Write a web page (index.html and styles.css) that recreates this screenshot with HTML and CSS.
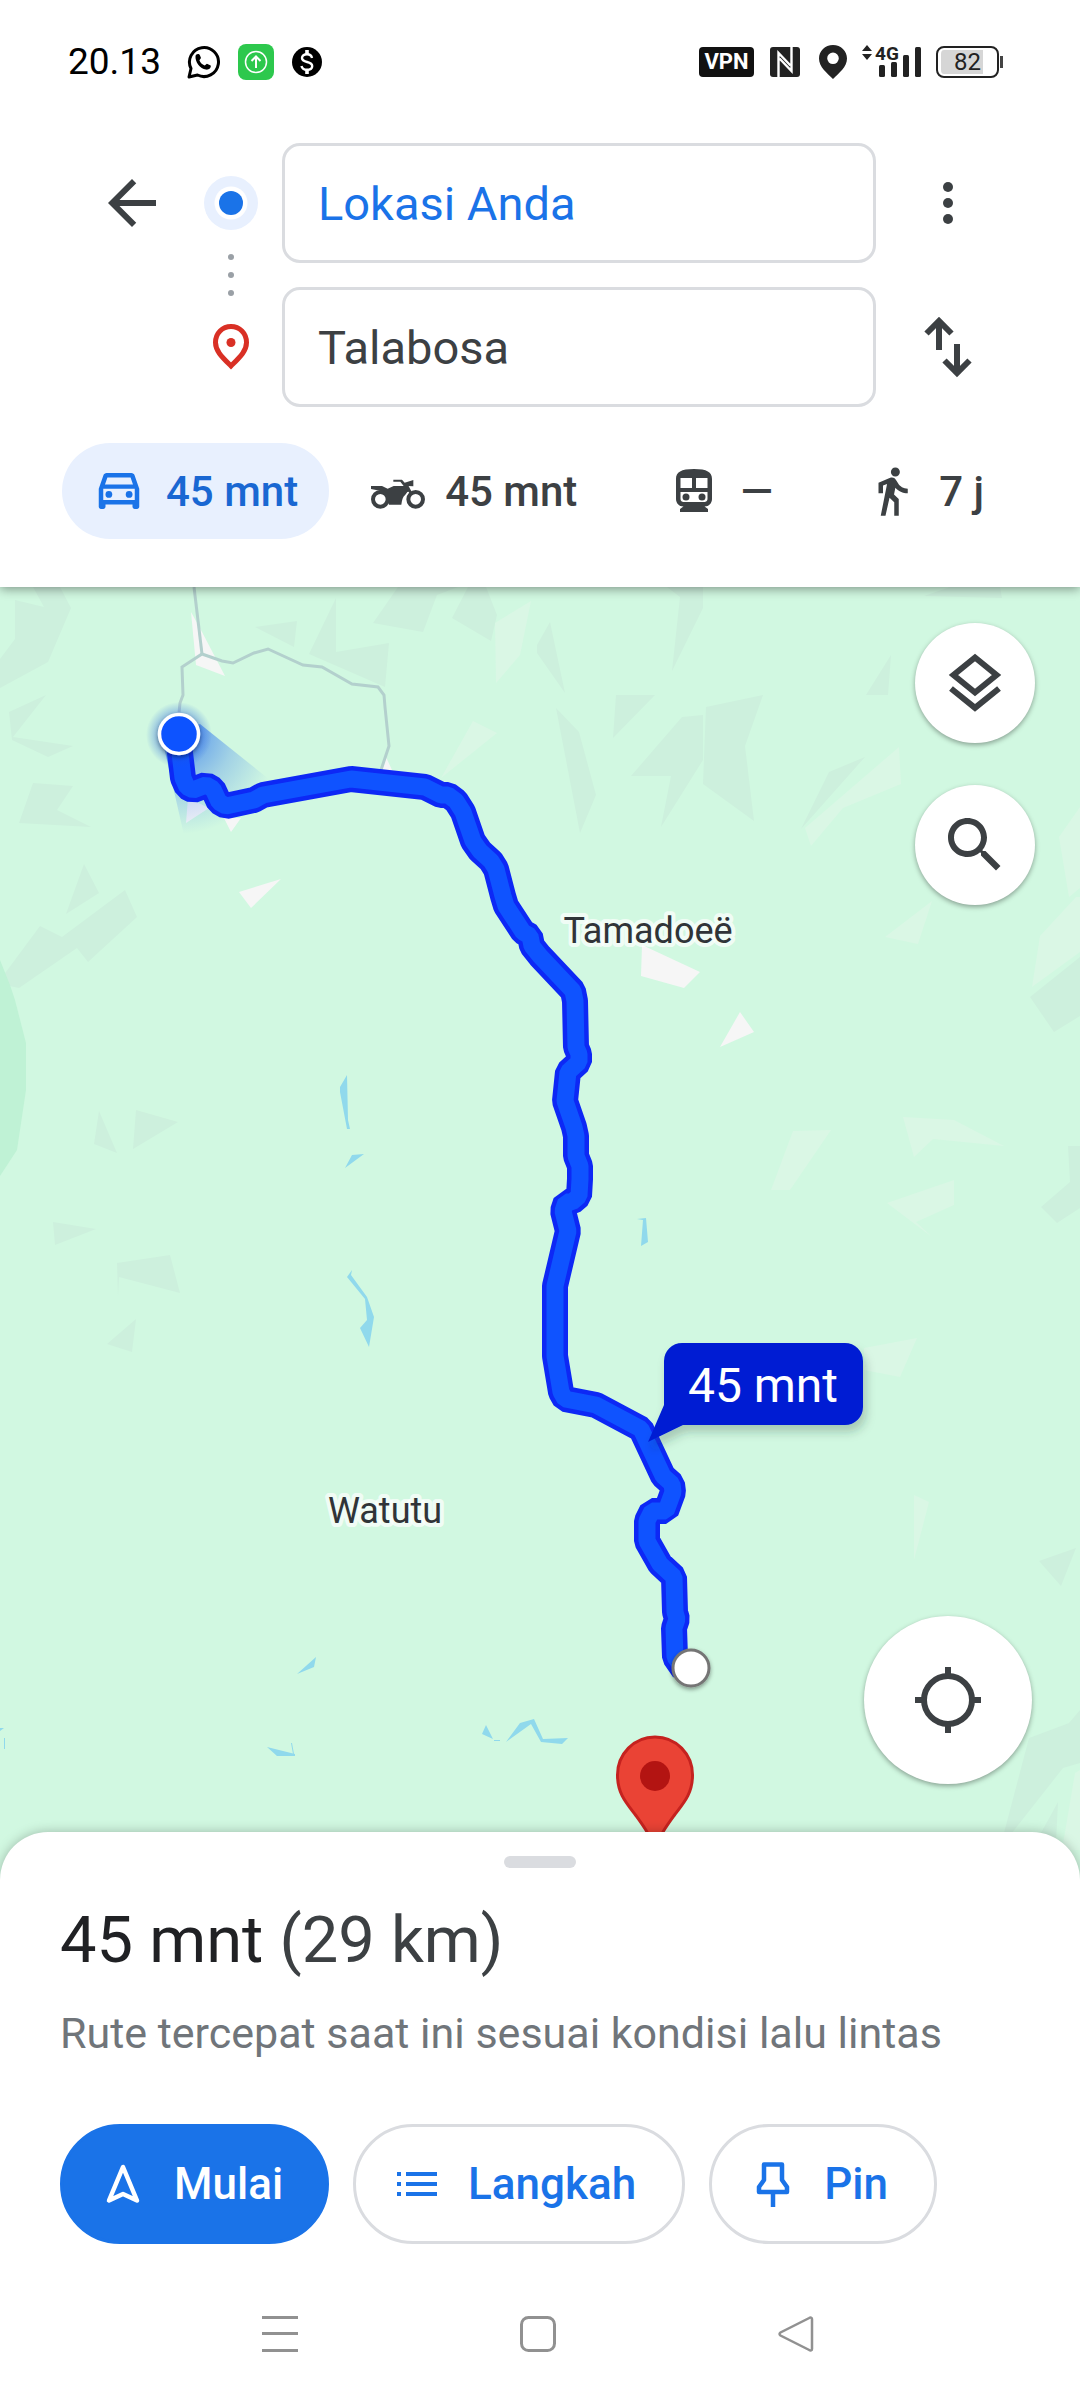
FILE: index.html
```html
<!DOCTYPE html>
<html lang="id">
<head>
<meta charset="utf-8">
<meta name="viewport" content="width=device-width, initial-scale=1">
<title>Rute ke Talabosa</title>
<link rel="stylesheet" href="styles.css">
</head>
<body>
<header class="header">
  <div class="status">
    <div class="status-group status-left">
      <span class="clock">20.13</span>
      <svg width="34" height="34" viewBox="0 0 34 34" fill="none" stroke="#000" stroke-width="3"><path d="M3 32l2-8.500A14.500 14.500 0 1 1 11.500 30z" stroke-linejoin="round"/><path d="M9.500 11c.3-2 3.500-3 4.500-.5l1 2.500-1.600 2.300c1 2.500 2.600 4.200 5.300 5.300l2.200-1.900 3.800 1.900c.6 2.700-2 4.300-4.700 4C14 24 9 17 9.500 11z" fill="#000" stroke="none"/></svg>
      <svg width="36" height="36" viewBox="0 0 36 36" fill="none" stroke="#fff" stroke-width="2"><rect width="36" height="36" rx="8" fill="#2dc84d" stroke="none"/><circle cx="18" cy="18" r="10.500" stroke-width="1.500"/><path d="M18 24V12.500M13.500 17l4.500-4.500 4.500 4.500"/></svg>
      <svg width="30" height="30" viewBox="0 0 30 30" fill="none" stroke="#fff"><circle cx="15" cy="15" r="15" fill="#000" stroke="none"/><path d="M20 11c-.4-2.500-2.500-3.800-5-3.800-3 0-5 1.500-5 3.800 0 5.500 10.200 2.500 10.200 8 0 2.300-2.200 3.800-5.200 3.800s-5-1.500-5.500-3.800" stroke-width="2.400"/><path d="M15 3v4M15 23v4" stroke-width="3.600"/></svg>
    </div>
    <div class="status-group status-right">
      <span class="vpn">VPN</span>
      <svg width="38" height="30" viewBox="0 0 38 30"><rect x="4" width="30" height="30" rx="3" fill="#222"/><path d="M12.500 30V6l12 12.500M25.500 0v24L13.500 11.500" fill="none" stroke="#fff" stroke-width="2.400"/></svg>
      <svg width="34" height="34" viewBox="0 0 34 34"><path fill="#222" fill-rule="evenodd" d="M17 0C9 0 3 6 3 13.500 3 22 11 28 17 34c6-6 14-12 14-20.500C31 6 25 0 17 0zm0 7.500a5.800 5.800 0 1 1 0 11.600 5.800 5.800 0 0 1 0-11.600z"/></svg>
      <svg class="signal" width="62" height="34" viewBox="0 0 62 34" fill="#222"><path d="M0 6l5-6 5 6zM0 9h10l-5 6z"/><text x="13" y="15" class="network">4G</text><rect x="17" y="20" width="6" height="12" rx="1.500"/><rect x="29" y="17" width="6" height="15" rx="1.500"/><rect x="41" y="10" width="6" height="22" rx="1.500"/><rect x="53" y="2" width="6" height="30" rx="1.500"/></svg>
      <span class="battery">82</span>
    </div>
  </div>

  <form class="trip">
    <button type="button" class="icon-button back" aria-label="Kembali"><svg width="72" height="72" viewBox="0 0 24 24" fill="#3c4043"><path d="M20 11H7.830l5.590-5.590L12 4l-8 8 8 8 1.410-1.410L7.830 13H20v-2z"/></svg></button>
    <div class="markers">
      <svg width="54" height="54" viewBox="0 0 54 54"><circle cx="27" cy="27" r="27" fill="#e8f0fe"/><circle cx="27" cy="27" r="16.500" fill="#fff"/><circle cx="27" cy="27" r="12" fill="#1a73e8"/></svg>
      <svg width="54" height="42" viewBox="0 0 54 42" fill="#9aa0a6"><circle cx="27" cy="3" r="3"/><circle cx="27" cy="21" r="3"/><circle cx="27" cy="39" r="3"/></svg>
      <svg width="54" height="54" viewBox="0 0 54 54"><path d="M27 6.500c-8.500 0-15.500 6.500-15.500 16C11.500 31 18 37 27 46c9-9 15.500-15 15.500-23.500 0-9.500-7-16-15.500-16z" fill="none" stroke="#d93025" stroke-width="5"/><circle cx="27" cy="22.500" r="4.500" fill="#d93025"/></svg>
    </div>
    <div class="fields">
      <input class="field field-origin" type="text" value="Lokasi Anda" aria-label="Titik awal">
      <input class="field" type="text" value="Talabosa" aria-label="Tujuan">
    </div>
    <div class="actions">
      <button type="button" class="icon-button" aria-label="Opsi lainnya"><svg width="72" height="72" viewBox="0 0 72 72" fill="#3c4043"><circle cx="36" cy="20" r="5"/><circle cx="36" cy="36" r="5"/><circle cx="36" cy="52" r="5"/></svg></button>
      <button type="button" class="icon-button" aria-label="Tukar titik awal dan tujuan"><svg width="72" height="72" viewBox="0 0 72 72" fill="none" stroke="#3c4043" stroke-width="6"><path d="M27 39V11M14.500 22.500L27 10l12.500 12.500M45 33v28M32.500 49.500L45 62l12.500-12.500"/></svg></button>
    </div>
  </form>

  <nav class="modes" aria-label="Moda perjalanan">
    <button type="button" class="mode mode-active"><svg width="54" height="54" viewBox="0 0 24 24" fill="#1a73e8"><path d="M18.920 5.010C18.720 4.420 18.160 4 17.500 4h-11c-.66 0-1.210.42-1.420 1.010L3 11v8c0 .55.45 1 1 1h1c.55 0 1-.45 1-1v-1h12v1c0 .55.45 1 1 1h1c.55 0 1-.45 1-1v-8l-2.080-5.990zM6.850 6h10.290l1.080 3.110H5.770L6.850 6zM19 16H5v-5h14v5z"/><circle cx="7.500" cy="13.500" r="1.500"/><circle cx="16.500" cy="13.500" r="1.500"/></svg>45 mnt</button>
    <button type="button" class="mode"><svg width="54" height="54" viewBox="36 6 162 162" fill="#3c4043"><path d="M36 72h33l17 8 18-8h30l-10-13h-21v-6h26l8 9 26-8v19l-17-1 9 16-10 2-6 8c-8 6-10 16-12 30H90L82 108 70 88 36 81z"/><circle cx="64" cy="112" r="22" fill="#fff" stroke="#3c4043" stroke-width="12"/><circle cx="170" cy="112" r="22" fill="#fff" stroke="#3c4043" stroke-width="12"/><path d="M142 68l16 30" stroke="#3c4043" stroke-width="8"/></svg>45 mnt</button>
    <button type="button" class="mode mode-train"><svg width="54" height="54" viewBox="0 0 54 54" fill="#3c4043"><path fill-rule="evenodd" d="M9 15C9 8 14 5 27 5s18 3 18 10v20c0 4-3 7.500-7.500 7.500L41 45v3H13v-3l3.500-2.500C12 42.500 9 39 9 35V15zm4.500-1v10H25V14H13.500zM29 14v10h11.500V14H29zM13.500 28v7c0 2 1.500 3 3 3h21c1.500 0 3-1 3-3v-7h-27z"/><circle cx="19" cy="33" r="3.500"/><circle cx="35" cy="33" r="3.500"/></svg>—</button>
    <button type="button" class="mode mode-walk"><svg width="54" height="54" viewBox="0 0 24 24" fill="#3c4043"><path d="M13.500 5.500c1.100 0 2-.9 2-2s-.9-2-2-2-2 .9-2 2 .9 2 2 2zM9.800 8.900L7 23h2.100l1.800-8 2.100 2v6h2v-7.500l-2.100-2 .6-3C14.800 12 16.800 13 19 13v-2c-1.900 0-3.500-1-4.300-2.400l-1-1.600c-.4-.6-1-1-1.700-1-.3 0-.5.1-.8.100L6 8.300V13h2V9.600l1.800-.7"/></svg>7 j</button>
  </nav>
</header>

<main class="map">
  <svg class="map-canvas" viewBox="0 587 1080 1293" preserveAspectRatio="xMidYMin slice" role="img" aria-label="Peta rute">
    <defs>
      <radialGradient id="beam" gradientUnits="userSpaceOnUse" cx="179" cy="734" r="100"><stop offset=".15" stop-color="#1a66f0" stop-opacity=".6"/><stop offset=".55" stop-color="#2a70f0" stop-opacity=".28"/><stop offset="1" stop-color="#2a70f0" stop-opacity="0"/></radialGradient>
      <radialGradient id="halo" gradientUnits="userSpaceOnUse" cx="179" cy="735" r="33"><stop offset=".5" stop-color="#1a56e0" stop-opacity=".5"/><stop offset="1" stop-color="#1a56e0" stop-opacity="0"/></radialGradient>
      <filter id="soft" x="-20%" y="-30%" width="150%" height="180%"><feDropShadow dx="3" dy="7" stdDeviation="5" flood-color="#1d4030" flood-opacity=".25"/></filter>
      <filter id="dot" x="-30%" y="-30%" width="160%" height="170%"><feDropShadow dx="0" dy="2" stdDeviation="2" flood-opacity=".4"/></filter>
    </defs>
    <g fill="#cdf0dd">
      <path d="M15 600l29 7-11-20h27l11 21-23 54-48 26v-29l15-20zM9 712l37-17-33 42 60 9-25 11-36-17zM33 783l40 3-16 24 34 17-72-4zM84 864l15 29-33 21zM125 890l12 27-49 45-11-14-58 40-19-4v-4l40-54 22 11zM255 627l42-6-3 26zM336 598v54l53-9-4 44-76-33zM398 587h60l-21 8-14 37-50-9zM468 587h18l11 28-6 26-39-23zM550 622l-13 23v8l28 40zM667 587h36v21l-31 63 8-74zM616 695h39l-42 43zM556 708l23 24 17 63-16 38zM682 717l21-2v45l-42 67 10-51h-40zM706 707l57-12-18 51 9 75-51-37zM891 655l-3 40h-22zM865 757l-64 72 28-57zM950 587h50l2 11-78-2zM1080 957v59l-26 16-24-35z"/>
      <path d="M99 1111l18 42-23-9zM136 1110l42 12-45 27zM53 1222l43 7-41 16zM117 1263l53-8 10 38-61-16-1 19zM136 1319l-4 33-25-8zM1068 1146h12v62l-23 15-16-16 29-25zM1039 1561l37-13-15 38zM1080 1710l-11 13-40 15-29 110 63-80 17-5zM1058 1802l-2 40h-20z"/>
    </g>
    <path fill="#daf7e5" d="M495 623l36-22-11 54-24 28zM473 721l24 12-56 45zM899 747l2 37-58 24-32 38-6-18zM932 901l-14 43-33-7zM1080 807l-21 30 10 60 11-9zM1076 897h4v55l-48 35 8-51zM793 1131l38-1-41 60h-19zM903 1117l51 3 50 26-71-7-19 18zM887 1203l67-23v25l-38 17 16 15zM864 1348l53-10-17 39-36-7zM914 1495l15 7-15 58zM1075 1773l5-3v80h-18z"/>
    <path fill="#bff2d5" d="M0 960l10 25 5 15 11 43v47l-9 60-17 26z"/>
    <path fill="#f6f6f6" d="M191 612l11 20 23 44-29-11zM188 798l21 10-23 15zM224 818h17l-10 14zM239 892l42-13-30 29zM386 757l6 13h-10zM642 945l58 27-16 16-43-12zM740 1012l14 20-34 15z"/>
    <path fill="#90d9ec" d="M347 1075l1 45 2 9h-3l-7-37v-5zM352 1155l12-1-19 14zM352 1270l-1 5 16 22 7 20-5 30-9-19 7-8-2-21-18-22zM637 1219l9-1 2 24-7 4 2-26zM316 1657l-2 10-17 7zM267 1747l28 7v2h-18zM486 1725l7 14-11-5zM506 1742l14-19 14-4 9 20 25-1-6 6-21-2-10-18zM0 1728h4l-4 3zM494 1740h6v1h-6zM291 1743h1l2 11h-1zM4 1738h1v11h-1z"/>
    <g fill="none" stroke="#b3d0cd" stroke-width="3"><path d="M194 587l8 67"/><path d="M179 713l1-10 3-8-1-28 20-13 20 7 11 2 21-10 14-4 35 16 19 2 30 17 26 3 6 8 1 12 4 39-8 24"/></g>
    <path fill="url(#beam)" d="M162 738l38-14 85 68-99 52z"/>
    <g fill="none" stroke-linejoin="bevel">
      <path stroke="#0d28f5" stroke-width="26" d="M180 740v13l3 25 4 9 6 3 13-5 7 4 6 13 7 4 28-6 9-5 88-16 74 8 16 8h7l8 6 7 11 10 29 7 10 11 10 5 8 7 27 3 10 17 26 7 4 2 10 8 10 33 35 2 10 1 46 3 7v8l-11 10-3 29 9 26 2 9v20l4 10v13l-1 17-7 6h-6l-3 9 5 20-13 55v70l6 36 4 7 31 6 45 24 22 47 9 8 1 8-7 19h-14l-5 10v20l13 23 14 13 1 35 2 7-3 9 1 29 9 13"/>
      <path stroke="#0f53ff" stroke-width="17" d="M180 740v13l3 25 4 9 6 3 13-5 7 4 6 13 7 4 28-6 9-5 88-16 74 8 16 8h7l8 6 7 11 10 29 7 10 11 10 5 8 7 27 3 10 17 26 7 4 2 10 8 10 33 35 2 10 1 46 3 7v8l-11 10-3 29 9 26 2 9v20l4 10v13l-1 17-7 6h-6l-3 9 5 20-13 55v70l6 36 4 7 31 6 45 24 22 47 9 8 1 8-7 19h-14l-5 10v20l13 23 14 13 1 35 2 7-3 9 1 29 9 13"/>
    </g>
    <circle cx="179" cy="735" r="33" fill="url(#halo)"/>
    <circle cx="179" cy="734" r="19.500" fill="#0f53ff" stroke="#fff" stroke-width="3.500" filter="url(#dot)"/>
    <circle cx="691" cy="1668" r="18" fill="#fff" stroke="#757575" stroke-width="3" filter="url(#dot)"/>
    <path d="M655 1737c-21 0-37.500 17-37.500 38 0 18 8 27 18 40 8 11 14 19 19.500 35 5.500-16 11.500-24 19.500-35 10-13 18-22 18-40 0-21-16.500-38-37.500-38z" fill="#ea4335" stroke="#c5221f" stroke-width="3"/>
    <circle cx="655" cy="1776" r="15" fill="#b31412"/>
    <path filter="url(#soft)" fill="#041fd3" d="M682 1343h163a18 18 0 0 1 18 18v46a18 18 0 0 1-18 18H683l-35 17 16-37v-44a18 18 0 0 1 18-18z"/>
    <text class="callout" x="763" y="1402">45 mnt</text>
    <text class="place" x="648" y="943">Tamadoeë</text>
    <text class="place" x="385" y="1523">Watutu</text>
  </svg>
  <div class="map-tools">
    <button type="button" class="round" aria-label="Lapisan peta"><svg width="72" height="72" viewBox="0 0 72 72" fill="none" stroke="#3c4043" stroke-width="6"><path d="M36 10.500L57.500 28 36 45.500 14.500 28zM12 41.500l24 19.300 24-19.300"/></svg></button>
    <button type="button" class="round" aria-label="Telusuri di sepanjang rute"><svg width="72" height="72" viewBox="0 0 24 24" fill="#3c4043"><path d="M15.500 14h-.79l-.28-.27C15.410 12.590 16 11.110 16 9.500 16 5.910 13.090 3 9.500 3S3 5.910 3 9.500 5.910 16 9.500 16c1.610 0 3.090-.59 4.230-1.570l.27.28v.79l5 4.990L20.490 19l-4.990-5zm-6 0C7.010 14 5 11.990 5 9.500S7.010 5 9.500 5 14 7.010 14 9.500 11.990 14 9.500 14z"/></svg></button>
  </div>
  <button type="button" class="round locate" aria-label="Lokasi saya"><svg width="72" height="72" viewBox="0 0 72 72" fill="none" stroke="#3c4043" stroke-width="6"><circle cx="36" cy="36" r="24"/><path d="M36 3v9M36 60v9M3 36h9M60 36h9"/></svg></button>
</main>

<section class="sheet">
  <div class="handle"></div>
  <h1 class="summary">45 mnt <span class="distance">(29 km)</span></h1>
  <p class="note">Rute tercepat saat ini sesuai kondisi lalu lintas</p>
  <div class="buttons">
    <button type="button" class="pill pill-primary"><svg width="54" height="54" viewBox="0 0 54 54" fill="none" stroke="#fff" stroke-width="4.500"><path d="M27 10L13 43.500l14-6.500 14 6.500z" stroke-linejoin="round"/></svg>Mulai</button>
    <button type="button" class="pill"><svg width="54" height="54" viewBox="0 0 54 54" fill="#1a73e8"><path d="M16 15h31v4H16zM16 25h31v4H16zM16 35h31v4H16zM7 15h4v4H7zM7 25h4v4H7zM7 35h4v4H7z"/></svg>Langkah</button>
    <button type="button" class="pill"><svg width="54" height="54" viewBox="0 0 54 54" fill="none" stroke="#1a73e8" stroke-width="4.500"><path d="M18 7.500h18v15.500l5 7v5H13v-5l5-7z" stroke-linejoin="round"/><path d="M27 35v15"/></svg>Pin</button>
  </div>
  <nav class="system-nav" aria-label="Navigasi sistem">
    <button type="button" class="icon-button" aria-label="Aplikasi terbaru"><svg width="36" height="36" viewBox="0 0 36 36" fill="#919191"><path d="M0 0h36v3H0zM0 16h36v3H0zM0 33h36v3H0z"/></svg></button>
    <button type="button" class="icon-button" aria-label="Beranda"><svg width="36" height="36" viewBox="0 0 36 36" fill="none" stroke="#919191" stroke-width="3"><rect x="1.500" y="1.500" width="33" height="33" rx="7"/></svg></button>
    <button type="button" class="icon-button" aria-label="Kembali"><svg width="36" height="36" viewBox="0 0 36 36" fill="none" stroke="#919191" stroke-width="2.500"><path d="M34 3v30c0 1.500-1.500 2-2.800 1L2.500 19.500c-1.300-1-1.300-2 0-3L31.200 2c1.300-1 2.800-.5 2.800 1z"/></svg></button>
  </nav>
</section>
</body>
</html>
```
FILE: styles.css
```css
* {
  box-sizing: border-box;
}

body {
  margin: 0;
  min-height: 100vh;
  display: flex;
  flex-direction: column;
  background: #fff;
  color: #3c4043;
  font-family: Roboto, "Noto Sans", sans-serif;
}

button {
  margin: 0;
  padding: 0;
  border: 0;
  background: none;
  color: inherit;
  font: inherit;
  cursor: pointer;
}

svg {
  display: block;
  flex: none;
}

/* Header */
.header {
  position: relative;
  z-index: 1;
  padding-bottom: 48px;
  background: #fff;
  box-shadow: 0 2px 10px rgba(0, 0, 0, 0.4);
}

.status {
  display: flex;
  justify-content: space-between;
  align-items: center;
  height: 36px;
  margin: 44px 75px 63px 68px;
}

.status-group {
  display: flex;
  align-items: center;
}

.status-left {
  gap: 18px;
}

.status-right {
  gap: 12px;
}

.clock {
  margin-right: 7px;
  color: #000;
  font-size: 37px;
  font-weight: 400;
  line-height: 36px;
}

.vpn {
  width: 55px;
  border-radius: 4px;
  background: #111;
  color: #fff;
  font-size: 22px;
  font-weight: 700;
  line-height: 30px;
  text-align: center;
}

.signal {
  overflow: visible;
}

.network {
  font-size: 19px;
  font-weight: 700;
}

.battery {
  position: relative;
  width: 63px;
  margin-right: 6px;
  padding: 2px 3px;
  border: 2px solid #222;
  border-radius: 8px;
  background: linear-gradient(90deg, #d6d6d6 80%, #fff 80%) content-box;
  color: #222;
  font-size: 24px;
  line-height: 24px;
  text-align: center;
}

.battery::after {
  content: "";
  position: absolute;
  top: 8px;
  right: -6px;
  width: 3px;
  height: 12px;
  background: #444;
}

.trip {
  display: flex;
  margin: 0 96px 36px;
}

.back {
  height: 120px;
  margin-right: 36px;
}

.icon-button {
  display: flex;
  align-items: center;
  justify-content: center;
}

.markers {
  display: flex;
  flex-direction: column;
  gap: 24px;
  margin-right: 24px;
  padding-top: 33px;
}

.fields {
  flex: 1;
  min-width: 0;
  display: flex;
  flex-direction: column;
  gap: 24px;
}

.field {
  width: 100%;
  height: 120px;
  padding: 0 33px;
  border: 3px solid #dadce0;
  border-radius: 18px;
  background: #fff;
  color: #3c4043;
  font-family: inherit;
  font-size: 47px;
}

.field-origin {
  color: #1a73e8;
}

.actions {
  display: grid;
  grid-template-rows: 120px 120px;
  gap: 24px;
  margin-left: 36px;
}

.modes {
  display: flex;
  gap: 12px;
  margin: 0 62px;
}

.mode {
  display: flex;
  align-items: center;
  justify-content: center;
  gap: 20px;
  height: 96px;
  padding: 0 31px 0 30px;
  border-radius: 48px;
  font-size: 42px;
  font-weight: 500;
  white-space: nowrap;
}

.mode-active {
  background: #e8f0fe;
  color: #1967d2;
}

.mode-train {
  width: 200px;
}

.mode-walk {
  flex: 1;
}

/* Map */
.map {
  position: relative;
  flex: 1;
  min-height: 720px;
  overflow: hidden;
  background: #d1f8e1;
}

.map-canvas {
  position: absolute;
  inset: 0;
  width: 100%;
  height: 100%;
}

.callout {
  fill: #fff;
  font-size: 48px;
  text-anchor: middle;
}

.place {
  fill: #303438;
  stroke: #fff;
  stroke-opacity: 0.7;
  stroke-width: 8px;
  stroke-linejoin: round;
  paint-order: stroke;
  font-size: 36px;
  text-anchor: middle;
}

.map-tools {
  position: absolute;
  top: 36px;
  right: 45px;
  display: flex;
  flex-direction: column;
  gap: 42px;
}

.round {
  display: flex;
  align-items: center;
  justify-content: center;
  width: 120px;
  height: 120px;
  border-radius: 50%;
  background: #fff;
  box-shadow: 0 2px 5px rgba(0, 0, 0, 0.35);
}

.locate {
  position: absolute;
  right: 48px;
  bottom: 96px;
  width: 168px;
  height: 168px;
}

/* Bottom sheet */
.sheet {
  position: relative;
  margin-top: -48px;
  padding: 24px 60px 0;
  border-radius: 48px 48px 0 0;
  background: #fff;
  box-shadow: 0 0 12px rgba(0, 0, 0, 0.25);
}

.handle {
  width: 72px;
  height: 12px;
  margin: 0 auto 34px;
  border-radius: 6px;
  background: #dadce0;
}

.summary {
  margin: 0 0 30px;
  color: #202124;
  font-size: 65px;
  font-weight: 400;
  line-height: 76px;
}

.distance {
  color: #3c4043;
}

.note {
  margin: 0 0 66px;
  color: #70757a;
  font-size: 43px;
  line-height: 50px;
}

.buttons {
  display: flex;
  gap: 24px;
  margin-bottom: 24px;
}

.pill {
  display: flex;
  align-items: center;
  gap: 24px;
  height: 120px;
  padding: 0 46px 0 34px;
  border: 3px solid #dadce0;
  border-radius: 60px;
  color: #1a73e8;
  font-size: 44px;
  font-weight: 500;
}

.pill-primary {
  padding: 0 43px 0 33px;
  border-color: #1a73e8;
  background: #1a73e8;
  color: #fff;
}

.system-nav {
  display: grid;
  grid-template-columns: repeat(3, 258px);
  justify-content: center;
  height: 132px;
  padding-right: 4px;
}
```
